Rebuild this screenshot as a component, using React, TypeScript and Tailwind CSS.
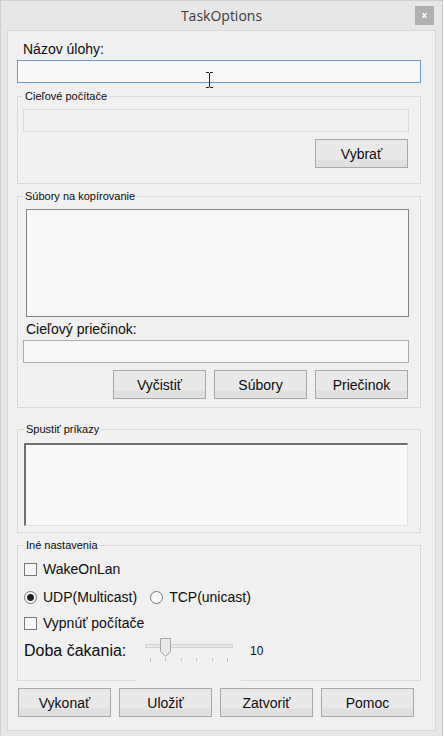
import { useState } from "react";
import type { ReactNode } from "react";

function PushButton({ children }: { children: ReactNode }) {
  return (
    <button
      type="button"
      className="h-[29px] w-[93px] shrink-0 border border-[#a8a8a8] bg-linear-to-b from-[#e9e9e9] from-70% to-[#e0e0e0] to-75% text-sm leading-4 text-[#0c0c0c]"
    >
      {children}
    </button>
  );
}

function Group({ title, className, children }: { title: string; className: string; children: ReactNode }) {
  return (
    <fieldset className={`min-w-0 border border-[#d8d8d8] ${className}`}>
      <legend className="px-0.5 text-[11px] leading-[13px]">{title}</legend>
      {children}
    </fieldset>
  );
}

function CheckBox({ label }: { label: string }) {
  return (
    <label className="flex items-center gap-1.5">
      <input type="checkbox" className="size-[13px] shrink-0 appearance-none border border-[#777] bg-[#f8f8f8] checked:bg-[#555]" />
      {label}
    </label>
  );
}

function RadioButton({ label, checked, onSelect }: { label: string; checked: boolean; onSelect: () => void }) {
  return (
    <label className="flex items-center gap-1.5">
      <input
        type="radio"
        name="protocol"
        checked={checked}
        onChange={onSelect}
        className="size-[13px] shrink-0 appearance-none rounded-full border border-[#777] bg-[#f8f8f8] checked:bg-[radial-gradient(circle,#222_3px,#f8f8f8_4px)]"
      />
      {label}
    </label>
  );
}

const ticks = [0, 10, 20, 30, 40, 50];

function DelaySlider({ value, onChange }: { value: number; onChange: (value: number) => void }) {
  const x = 5 + Math.round(value * 1.54);
  return (
    <div className="relative -mb-5 h-[47px] w-[104px] bg-[#f0f0f0] px-2">
      <svg width="88" height="28" viewBox="0 0 88 28" shapeRendering="crispEdges" aria-hidden="true">
        <rect x="0.5" y="7.5" width="87" height="3" fill="#e7e8e8" stroke="#d3d3d3" />
        {ticks.map((tick) => (
          <rect
            key={tick}
            x={5 + Math.round(tick * 1.54)}
            y="21"
            width="1"
            height={tick === 0 || tick === 50 ? 4 : 3}
            fill="#c0c0c0"
          />
        ))}
        <path
          d={`M${x - 4.5} 1.5h10v13l-5 5l-5 -5z`}
          fill="#e9e9e9"
          stroke="#a6a6a6"
          shapeRendering="auto"
        />
      </svg>
      <input
        id="delay"
        type="range"
        min={0}
        max={50}
        value={value}
        onChange={(event) => onChange(Number(event.target.value))}
        className="absolute inset-x-2 top-0 h-7 opacity-0"
      />
    </div>
  );
}

export default function App() {
  const [protocol, setProtocol] = useState("udp");
  const [delay, setDelay] = useState(10);

  return (
    <div className="min-h-screen bg-[#f5f5f5] pr-px font-['Liberation_Sans',Arial,sans-serif] text-sm leading-4 text-[#0c0c0c]">
      <div className="min-h-screen border-x border-t border-[#cfcfcf] bg-[#e7e7e7] px-1.5 pb-[5px]">
        <header className="flex h-[29px] items-center">
          <h1 className="flex-1 pl-[21px] text-center font-['Open_Sans','Noto_Sans',sans-serif] text-sm leading-5 text-[#3a3a3a]">
            TaskOptions
          </h1>
          <button
            type="button"
            aria-label="Zavrieť"
            className="mr-0.5 flex size-[19px] items-center justify-center bg-[#b0b0b0]"
          >
            <svg width="5" height="5" viewBox="0 0 5 5" stroke="#fff" strokeWidth="1.4" aria-hidden="true">
              <path d="M0.5 0l4 5M4.5 0l-4 5" />
            </svg>
          </button>
        </header>

        <main className="border border-[#d8d8d8] bg-[#f0f0f0] pt-2.5 pr-3.5 pb-[13px] pl-[9px]">
          <label htmlFor="task-name" className="ml-1.5 block">
            Názov úlohy:
          </label>
          <div className="relative mt-[3px]">
            <input id="task-name" type="text" className="block h-[23px] w-full border border-[#6f9bc9] bg-[#f8f8f8] px-1 outline-none" />
            <svg
              className="pointer-events-none absolute top-[11px] left-[188px]"
              width="9"
              height="18"
              viewBox="0 0 9 18"
              fill="none"
              stroke="#222"
              shapeRendering="crispEdges"
              aria-hidden="true"
            >
              <path d="M1 1.5h3M5 1.5h3M4.5 2v14M1 16.5h3M5 16.5h3" />
            </svg>
          </div>

          <Group title="Cieľové počítače" className="mt-[7px] pt-1.5 pr-[11px] pb-[15px] pl-[5px]">
            <input type="text" disabled aria-label="Cieľové počítače" className="block h-[23px] w-full border border-[#d8d8d8] bg-[#f0f0f0] px-1" />
            <div className="mt-[7px] flex justify-end pr-px">
              <PushButton>Vybrať</PushButton>
            </div>
          </Group>

          <Group title="Súbory na kopírovanie" className="mt-1.5 pt-1.5 pr-[11px] pb-2 pl-[5px]">
            <select multiple aria-label="Súbory na kopírovanie" className="ml-[3px] block h-[108px] w-[calc(100%-3px)] appearance-none border border-[#81838d] bg-[#f8f8f8]" />
            <label htmlFor="target-folder" className="mt-1 ml-[3px] block">
              Cieľový priečinok:
            </label>
            <input id="target-folder" type="text" className="mt-[3px] block h-[23px] w-full border border-[#ababab] bg-[#f8f8f8] px-1" />
            <div className="mt-[7px] flex justify-end gap-2 pr-px">
              <PushButton>Vyčistiť</PushButton>
              <PushButton>Súbory</PushButton>
              <PushButton>Priečinok</PushButton>
            </div>
          </Group>

          <Group title="Spustiť príkazy" className="mt-[15px] pt-[7px] pr-3 pb-1.5 pl-1.5">
            <textarea
              aria-label="Spustiť príkazy"
              className="block h-[83px] w-full resize-none border-t-2 border-r border-b border-l-2 border-t-[#707070] border-r-[#e0e0e0] border-b-[#e0e0e0] border-l-[#707070] bg-[#f8f8f8]"
            />
          </Group>

          <Group title="Iné nastavenia" className="mt-1.5 pt-[9px] pr-3 pb-4 pl-1.5">
            <CheckBox label="WakeOnLan" />
            <div className="mt-3 flex gap-[13px]">
              <RadioButton label="UDP(Multicast)" checked={protocol === "udp"} onSelect={() => setProtocol("udp")} />
              <RadioButton label="TCP(unicast)" checked={protocol === "tcp"} onSelect={() => setProtocol("tcp")} />
            </div>
            <div className="mt-2.5">
              <CheckBox label="Vypnúť počítače" />
            </div>
            <div className="mt-1.5 flex">
              <label htmlFor="delay" className="mt-1 w-[113px] text-base leading-5">
                Doba čakania:
              </label>
              <DelaySlider value={delay} onChange={setDelay} />
              <output htmlFor="delay" className="mt-2 ml-[9px] text-xs leading-[13px]">
                {delay}
              </output>
            </div>
          </Group>

          <div className="mt-[7px] flex gap-2 pl-px">
            <PushButton>Vykonať</PushButton>
            <PushButton>Uložiť</PushButton>
            <PushButton>Zatvoriť</PushButton>
            <PushButton>Pomoc</PushButton>
          </div>
        </main>
      </div>
    </div>
  );
}
